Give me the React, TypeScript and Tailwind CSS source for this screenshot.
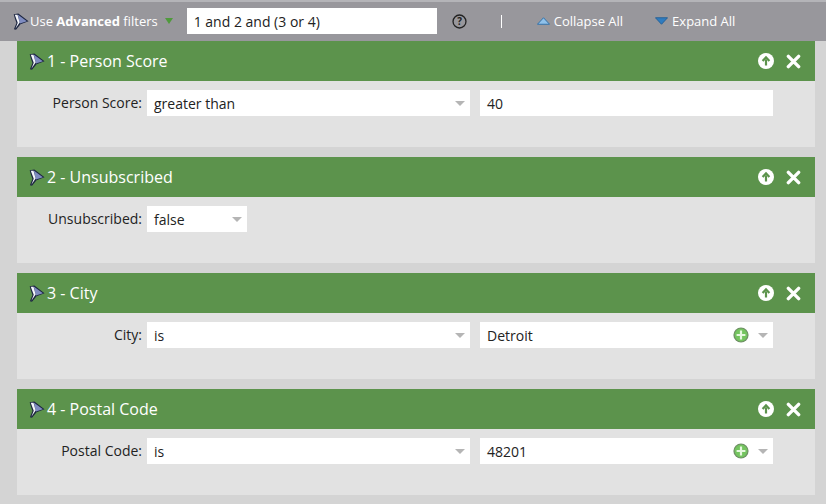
const font = "font-['Open_Sans',sans-serif]";

function Funnel({ className }: { className: string }) {
  return (
    <svg viewBox="0 0 16 16" className={className}>
      <path d="M1.6 1.2 L6 .4 L15.6 7.8 L8 10.6 L3.8 15.8 L1.8 15.2 L4.2 9.4 L2.6 5 Z" fill="#1c2540" />
      <path d="M5.4 1.4 L14 7.7 L7.4 9.8 Z" fill="#7f8cc0" />
      <path d="M2.6 1.6 L5.2 1.6 L7.2 9 L3.2 14.8 L5.4 9.2 Z" fill="#f4f6fb" />
    </svg>
  );
}

function Caret() {
  return <span className="h-0 w-0 border-x-[5.5px] border-t-[5px] border-x-transparent border-t-[#b5b5b5]" />;
}

function Select({ value, width, plus }: { value: string; width: string; plus?: boolean }) {
  return (
    <div className={`flex h-[26px] items-center justify-between bg-white pl-[7px] pr-[5px] text-[14px] text-[#222] ${width}`}>
      <span className="pt-px">{value}</span>
      <div className="flex items-center gap-[9px]">
        {plus && (
          <svg viewBox="0 0 16 16" className="h-4 w-4">
            <circle cx="8" cy="8" r="7.6" fill="#6f8f66" />
            <circle cx="8" cy="8" r="6.4" fill="#74c45f" />
            <path d="M8 3.6v8.8M3.6 8h8.8" stroke="#e6f8df" strokeWidth="2.2" />
          </svg>
        )}
        <Caret />
      </div>
    </div>
  );
}

function Card({ title, label, children }: { title: string; label: string; children: React.ReactNode }) {
  return (
    <section className="h-[106px] bg-[#e2e2e2]">
      <header className="flex h-10 items-center bg-[#5c934c] pl-[11px] pr-[14px] text-white">
        <Funnel className="h-[17px] w-[17px] shrink-0" />
        <h2 className="ml-[2px] text-[16px] font-medium leading-none">{title}</h2>
        <div className="ml-auto flex items-center gap-[12px]">
          <svg viewBox="0 0 16 16" className="h-4 w-4">
            <circle cx="8" cy="8" r="8" fill="#fff" />
            <path d="M8 12.6V6.4M4.6 8 8 4.3 11.4 8" fill="none" stroke="#5c934c" strokeWidth="2.2" />
          </svg>
          <svg viewBox="0 0 16 16" className="h-[15px] w-[15px]">
            <path d="M2.5 2.5l11 11M13.5 2.5l-11 11" stroke="#fff" strokeWidth="3.6" strokeLinecap="round" />
          </svg>
        </div>
      </header>
      <div className="flex items-start pt-[9px]">
        <label className="w-[130px] pr-[5px] text-right text-[14px] leading-[26px] text-[#222]">{label}</label>
        {children}
      </div>
    </section>
  );
}

export default function App() {
  return (
    <div className={`h-[504px] w-[826px] overflow-hidden bg-[#d4d4d4] ${font}`}>
      <div className="flex h-[41px] items-center border-t-[2px] border-[#b4b4b8] bg-[#98979c] pb-[1px] text-[13px] text-white">
        <Funnel className="ml-[12px] h-[17px] w-[17px] shrink-0" />
        <span className="ml-px pt-[2px]">
          Use <b className="font-bold">Advanced</b> filters
        </span>
        <span className="ml-[7px] h-0 w-0 border-x-[4px] border-t-[6px] border-x-transparent border-t-[#4f9a3c]" />
        <div className="ml-[14px] flex h-[26px] w-[250px] items-center bg-white pl-[7px] text-[14px] text-[#222]">1 and 2 and (3 or 4)</div>
        <svg viewBox="0 0 16 16" className="ml-[15px] h-[15px] w-[15px]">
          <circle cx="8" cy="8" r="6.9" fill="none" stroke="#222" strokeWidth="1.4" />
          <text x="8" y="11.6" textAnchor="middle" fontSize="10.5" fontWeight="700" fill="#222">?</text>
        </svg>
        <span className="ml-[34px] h-[13px] w-px bg-white" />
        <svg viewBox="0 0 14 8" className="ml-[35px] h-2 w-[13px]">
          <path d="M7 .5 13.5 7.5H.5Z" fill="#8fc1ea" stroke="#2b6ea8" />
        </svg>
        <span className="ml-[4px] pt-[2px]">Collapse All</span>
        <svg viewBox="0 0 14 8" className="ml-[32px] h-2 w-[13px]">
          <path d="M7 7.5 13.5.5H.5Z" fill="#2f7cc0" stroke="#245f96" />
        </svg>
        <span className="ml-[4px] pt-[2px]">Expand All</span>
      </div>
      <main className="mr-[11px] ml-[17px] flex flex-col gap-[10px]">
        <Card title="1 - Person Score" label="Person Score:">
          <Select value="greater than" width="w-[323px]" />
          <div className="ml-[10px] flex h-[26px] w-[293px] items-center bg-white pl-[7px] pt-px text-[14px] text-[#222]">40</div>
        </Card>
        <Card title="2 - Unsubscribed" label="Unsubscribed:">
          <Select value="false" width="w-[100px]" />
        </Card>
        <Card title="3 - City" label="City:">
          <Select value="is" width="w-[323px]" />
          <div className="ml-[10px]"><Select value="Detroit" width="w-[293px]" plus /></div>
        </Card>
        <Card title="4 - Postal Code" label="Postal Code:">
          <Select value="is" width="w-[323px]" />
          <div className="ml-[10px]"><Select value="48201" width="w-[293px]" plus /></div>
        </Card>
      </main>
    </div>
  );
}
